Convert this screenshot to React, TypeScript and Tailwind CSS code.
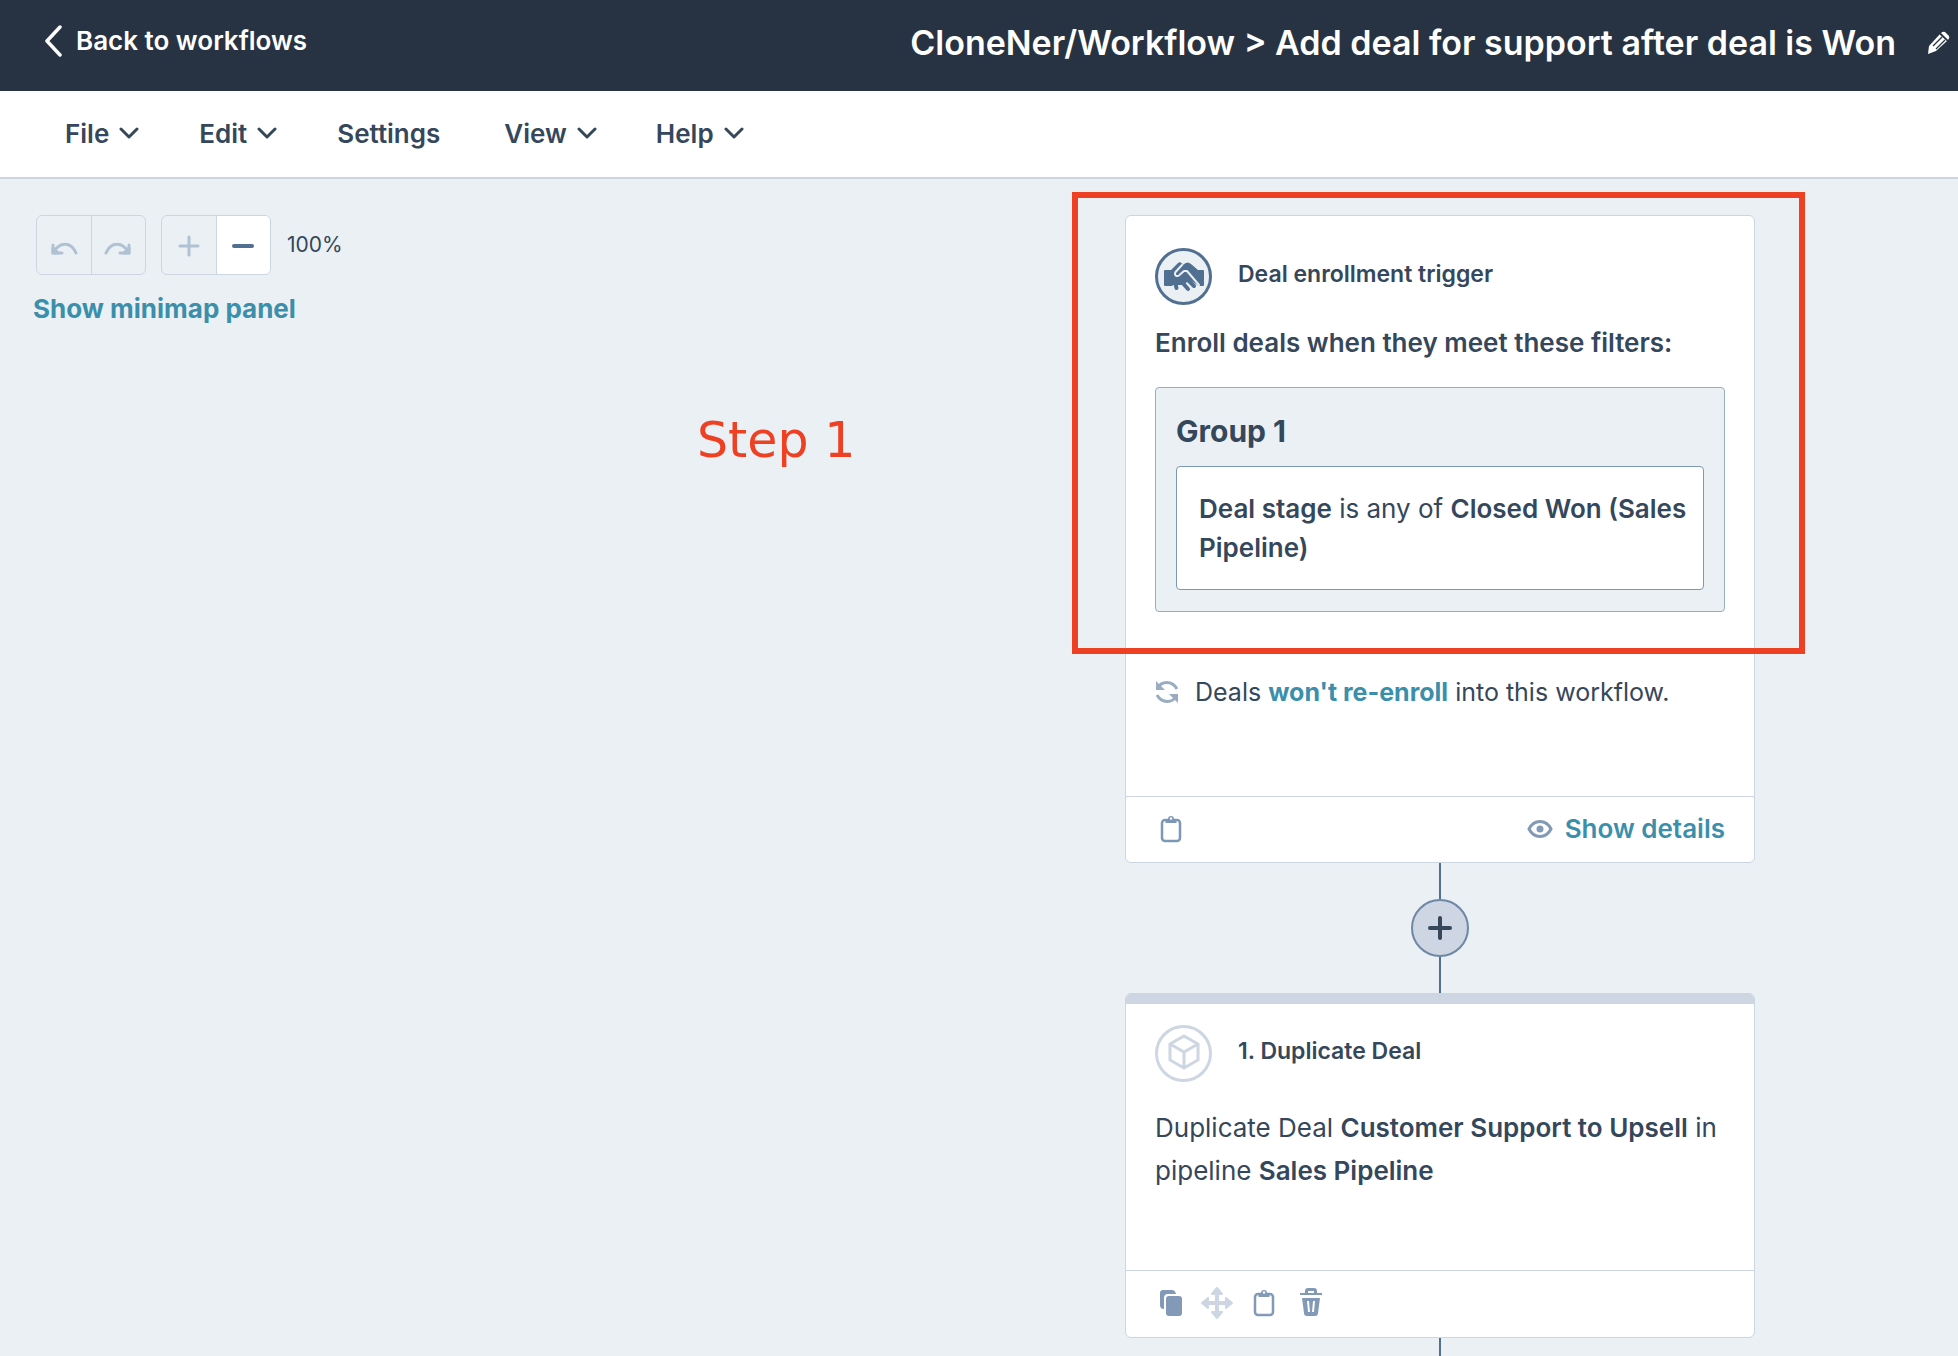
import React from "react";

const INK = "text-[#35475b]";
const LINK = "text-[#3b8fab]";

function Chevron() {
  return (
    <svg width="20" height="12" viewBox="0 0 20 12" fill="none" stroke="currentColor" strokeWidth="3" strokeLinecap="round" strokeLinejoin="round">
      <path d="M2 2l8 8 8-8" />
    </svg>
  );
}

function UndoIcon({ flip = false }: { flip?: boolean }) {
  return (
    <svg width="28" height="16" viewBox="0 0 28 16" fill="none" stroke="currentColor" strokeWidth="3" strokeLinecap="round" strokeLinejoin="round" className={flip ? "-scale-x-100" : ""}>
      <path d="M3 4v8h9M4 11C9 1 21 0 26 12" />
      <path d="M3 7v5h5z" fill="currentColor" />
    </svg>
  );
}

function Clipboard() {
  return (
    <svg width="22" height="28" viewBox="0 0 22 28" fill="none">
      <rect x="2" y="5" width="18" height="21" rx="3" stroke="currentColor" strokeWidth="2.5" />
      <path d="M5 7l3-3a3 3 0 0 1 6 0l3 3-1 1H6z" fill="currentColor" />
      <circle cx="11" cy="3.5" r="1.2" fill="#fff" />
    </svg>
  );
}

function Handshake() {
  return (
    <svg width="42" height="32" viewBox="0 0 42 32" strokeLinecap="round" strokeLinejoin="round" fill="none">
      <path fill="currentColor" d="M2 9h6l7-7q2-1.500 3.500 0L20 4q4-4.500 8-1l7 6h5q1 0 1 1v14q0 1-1 1h-4L27 19 20 24H10L9 25H2q-1 0-1-1V10q0-1 1-1z" />
      <path stroke="currentColor" strokeWidth="4" d="M12 21l1.500 6M18 20l7 8M22 16l9 9" />
      <path stroke="#eaf0f4" strokeWidth="2" d="M19 4l-6.500 7q-1.500 3 1 4 2 .5 3.500-1.500L21 10h3l12 14" />
    </svg>
  );
}

function Connector() {
  return <div className="h-9 w-0.5 bg-[#516f90]" />;
}

const menus = [
  { label: "File", more: true, pad: "mr-[60px]" },
  { label: "Edit", more: true, pad: "mr-[60px]" },
  { label: "Settings", more: false, pad: "mr-16" },
  { label: "View", more: true, pad: "mr-[59px]" },
  { label: "Help", more: true, pad: "" },
];

export default function App() {
  return (
    <div className={`flex h-screen flex-col overflow-hidden bg-[#eaf0f4] font-['Inter',sans-serif] text-[25px] ${INK}`}>
      <header className="flex h-[91px] shrink-0 items-start justify-between bg-[#273342] pl-11 pr-2 pt-5 font-semibold text-white">
        <a href="#workflows" className="flex items-center gap-3.5 text-[26px]">
          <svg width="18" height="32" viewBox="0 0 18 32" fill="none" stroke="currentColor" strokeWidth="3.5" strokeLinecap="round" strokeLinejoin="round">
            <path d="M16 2L3 16l13 14" />
          </svg>
          <span className="leading-[42px]">Back to workflows</span>
        </a>
        <div className="flex items-center gap-8">
          <h1 className="text-[34px] leading-[46px]">CloneNer/Workflow &gt; Add deal for support after deal is Won</h1>
          <button aria-label="Edit name">
            <svg width="22" height="24" viewBox="0 0 22 24">
              <path fill="currentColor" d="M0 23l1-8L12 3l7 7L8 20z" />
              <path fill="currentColor" d="M13 2q2-2 4-1l4 4q1 2-1 4z" />
              <path stroke="#273342" strokeWidth="1.3" fill="none" d="M12 3l8 7M5 15l9-9M8 18l9-9" />
            </svg>
          </button>
        </div>
      </header>

      <nav className="flex h-[88px] shrink-0 items-center border-b-2 border-[#cbd6e2] bg-white pb-0.5 pl-[65px] text-[26px] font-semibold">
        {menus.map((m) => (
          <button key={m.label} className={`flex items-center gap-2.5 ${m.pad}`}>
            {m.label}
            {m.more && <Chevron />}
          </button>
        ))}
      </nav>

      <main className="relative flex-1">
        <div className="flex flex-col items-start pl-[33px] pt-9">
          <div className="flex items-center pl-[3px]">
            <div className="flex h-[60px] w-[110px] divide-x divide-[#cbd6e2] rounded-md border border-[#cbd6e2] text-[#b0c1d4]">
              <button aria-label="Undo" className="flex flex-1 items-center justify-center pt-2"><UndoIcon /></button>
              <button aria-label="Redo" className="flex flex-1 items-center justify-center pt-2"><UndoIcon flip /></button>
            </div>
            <div className="ml-[15px] flex h-[60px] w-[110px] divide-x divide-[#cbd6e2] overflow-hidden rounded-md border border-[#cbd6e2]">
              <button aria-label="Zoom in" className="flex flex-1 items-center justify-center pt-0.5 text-[#b0c1d4]">
                <svg width="22" height="22" stroke="currentColor" strokeWidth="3" strokeLinecap="round"><path d="M11 2v18M2 11h18" /></svg>
              </button>
              <button aria-label="Zoom out" className="flex flex-1 items-center justify-center bg-white pt-0.5 text-[#516f90]">
                <svg width="24" height="22" stroke="currentColor" strokeWidth="4" strokeLinecap="round"><path d="M3 11h18" /></svg>
              </button>
            </div>
            <span className="ml-4 text-[21px]">100%</span>
          </div>
          <button className={`mt-4 text-[26px] font-bold leading-9 ${LINK}`}>Show minimap panel</button>
        </div>

        <p className="absolute left-[697px] top-[232px] font-['DejaVu_Sans',sans-serif] text-[49px] leading-[60px] text-[#ee4023]">Step 1</p>

        <div className="absolute left-[1125px] top-9 flex w-[630px] flex-col items-center">
          <section className="flex h-[648px] w-full flex-col rounded-md border border-[#cbd6e2] bg-white">
            <div className="flex-1 px-[29px] pt-8">
              <div className="flex h-[57px] items-start gap-[26px]">
                <span className="flex size-[57px] items-center justify-center rounded-full border-3 border-[#516f90] bg-[#eaf0f4] text-[#516f90]"><Handshake /></span>
                <h2 className="pt-2 text-[23px] font-semibold leading-[36px]">Deal enrollment trigger</h2>
              </div>
              <h3 className="mt-5 text-[26px] font-semibold leading-9">Enroll deals when they meet these filters:</h3>
              <div className="mt-[26px] rounded border border-[#99acc2] bg-[#eaf0f4] px-5 pb-[21px] pt-6">
                <h4 className="text-[30px] font-bold leading-[38px]">Group 1</h4>
                <p className="mt-4 rounded border border-[#7c98b6] bg-white py-[22px] pl-[22px] pr-3 text-[26px] leading-[39px]">
                  <b className="font-semibold">Deal stage</b> is any of <b className="font-semibold">Closed Won (Sales Pipeline)</b>
                </p>
              </div>
              <div className="mt-[60px] flex items-center gap-4 leading-10">
                <svg width="24" height="24" viewBox="0 0 24 24" fill="none" className="text-[#99acc2]" stroke="currentColor" strokeWidth="3">
                  <path d="M3 8C6 1 17 0 22 9M21 16C18 23 7 24 2 15" />
                  <path fill="currentColor" stroke="none" d="M1 1v9h9zM23 23v-9h-9z" />
                </svg>
                <p>Deals <a href="#reenroll" className={`font-bold ${LINK}`}>won't re-enroll</a> into this workflow.</p>
              </div>
            </div>
            <footer className="flex h-[66px] items-center justify-between border-t border-[#cbd6e2] pb-0.5 pl-[34px] pr-[29px] text-[#7c98b6]">
              <button aria-label="Copy to clipboard"><Clipboard /></button>
              <button className={`flex items-center gap-3 text-[26px] font-semibold ${LINK}`}>
                <svg width="26" height="18" viewBox="0 0 26 18" className="text-[#8299b8]" fill="none" stroke="currentColor" strokeWidth="3">
                  <path d="M2 9C7-1 19-1 24 9 19 19 7 19 2 9z" />
                  <circle cx="13" cy="9" r="3.500" fill="currentColor" stroke="none" />
                </svg>
                Show details
              </button>
            </footer>
          </section>

          <Connector />
          <button aria-label="Add action" className="flex size-[58px] items-center justify-center rounded-full border-2 border-[#6f87a6] bg-[#cdd6e2]">
            <svg width="26" height="26" stroke="currentColor" strokeWidth="4" strokeLinecap="round"><path d="M13 3v20M3 13h20" /></svg>
          </button>
          <Connector />

          <section className="flex h-[345px] w-full flex-col overflow-hidden rounded-md border border-[#cbd6e2] bg-white">
            <div className="h-2.5 bg-[#cdd6e2]" />
            <div className="flex-1 px-[29px] pt-[21px]">
              <div className="flex h-[57px] items-start gap-[26px]">
                <span className="flex size-[57px] items-center justify-center rounded-full border-3 border-[#cdd6e2] pb-1 text-[#cdd6e2]">
                  <svg width="32" height="36" viewBox="0 0 32 36" fill="none" stroke="currentColor" strokeWidth="3"><path d="M16 2l14 8v16l-14 8-14-8V10zM2 10l14 8 14-8M16 18v16" /></svg>
                </span>
                <h2 className="pt-2 text-[23px] font-semibold leading-[36px]">1. Duplicate Deal</h2>
              </div>
              <p className="mt-6 text-[26px] leading-[43px]">
                Duplicate Deal <b className="font-semibold">Customer Support to Upsell</b> in pipeline <b className="font-semibold">Sales Pipeline</b>
              </p>
            </div>
            <footer className="flex h-[67px] items-center border-t border-[#cbd6e2] pb-0.5 pl-[33px] text-[#8299b8]">
              <button aria-label="Duplicate">
                <svg width="24" height="28" viewBox="0 0 24 28" fill="currentColor"><path d="M4 1h9q3 0 4 4H9Q5 5 5 9v11Q1 20 1 16V4q0-3 3-3z" /><rect x="7" y="7" width="16" height="20" rx="3" /></svg>
              </button>
              <button aria-label="Move" className="ml-[17px] text-[#cdd6e2]">
                <svg width="34" height="34" viewBox="0 0 34 34" stroke="currentColor" strokeWidth="4" fill="currentColor" strokeLinejoin="round"><path d="M17 4v26M4 17h26" /><path strokeWidth="2" d="M17 2l5 6h-10zM17 32l5-6h-10zM2 17l6-5v10zM32 17l-6-5v10z" /></svg>
              </button>
              <button aria-label="Copy to clipboard" className="ml-[19px]"><Clipboard /></button>
              <button aria-label="Delete" className="ml-[25px] pb-0.5">
                <svg width="22" height="30" viewBox="0 0 22 30" fill="currentColor"><path d="M0 6h5V4q0-3 3-3h6q3 0 3 3v2h5v2H0zM8 6h6V4H8zM2 11h18l-2 15q0 3-3 3H7q-3 0-3-3z" fillRule="evenodd" /><path stroke="#fff" strokeWidth="2" d="M8 14l1 11M14 14l-1 11" /></svg>
              </button>
            </footer>
          </section>
          <Connector />
        </div>

        <div className="pointer-events-none absolute left-[1072px] top-[13px] h-[462px] w-[733px] border-6 border-[#ee4023]" />
      </main>
    </div>
  );
}
